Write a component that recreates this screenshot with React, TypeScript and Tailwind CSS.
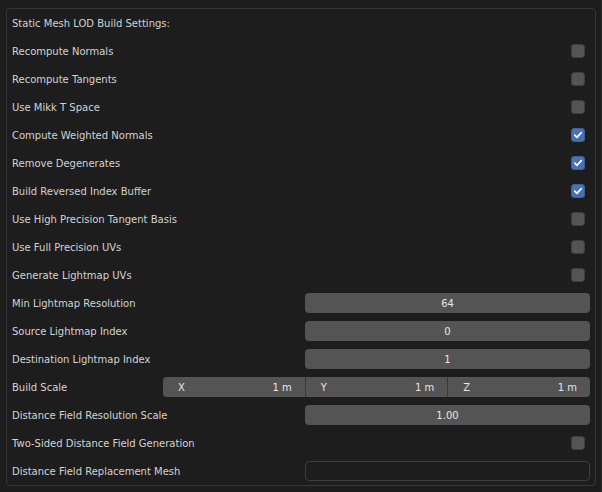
import React from "react";

type Row =
    | { kind: "title"; label: string }
    | { kind: "check"; label: string; checked: boolean }
    | { kind: "number"; label: string; value: string }
    | { kind: "vector"; label: string }
    | { kind: "object"; label: string };

const rows: Row[] = [
    { kind: "title", label: "Static Mesh LOD Build Settings:" },
    { kind: "check", label: "Recompute Normals", checked: false },
    { kind: "check", label: "Recompute Tangents", checked: false },
    { kind: "check", label: "Use Mikk T Space", checked: false },
    { kind: "check", label: "Compute Weighted Normals", checked: true },
    { kind: "check", label: "Remove Degenerates", checked: true },
    { kind: "check", label: "Build Reversed Index Buffer", checked: true },
    { kind: "check", label: "Use High Precision Tangent Basis", checked: false },
    { kind: "check", label: "Use Full Precision UVs", checked: false },
    { kind: "check", label: "Generate Lightmap UVs", checked: false },
    { kind: "number", label: "Min Lightmap Resolution", value: "64" },
    { kind: "number", label: "Source Lightmap Index", value: "0" },
    { kind: "number", label: "Destination Lightmap Index", value: "1" },
    { kind: "vector", label: "Build Scale" },
    { kind: "number", label: "Distance Field Resolution Scale", value: "1.00" },
    { kind: "check", label: "Two-Sided Distance Field Generation", checked: false },
    { kind: "object", label: "Distance Field Replacement Mesh" },
];

const Checkbox = ({ checked }: { checked: boolean }) =>
    checked ? (
        <div className="w-[14px] h-[14px] rounded-[3px] bg-[#4772b3] border border-[#3b5f96] flex items-center justify-center">
            <svg width="10" height="10" viewBox="0 0 10 10">
                <path d="M1.8 5.2 L4 7.3 L8.3 2.6" fill="none" stroke="#fff" strokeWidth="1.7" strokeLinecap="round" strokeLinejoin="round" />
            </svg>
        </div>
    ) : (
        <div className="w-[14px] h-[14px] rounded-[3px] bg-[#545454] border border-[#3d3d3d]" />
    );

const Segment = ({ axis, last }: { axis: string; last?: boolean }) => (
    <div className={`flex-1 h-full flex items-center justify-between pl-[15px] pr-[13px] ${last ? "" : "border-r border-[#3a3a3a]"}`}>
        <span>{axis}</span>
        <span>1 m</span>
    </div>
);

const App = () => {
    return (
        <div
            className="w-[602px] h-[492px] bg-[#1d1d1d] pt-[8px] pl-[6px] pr-[5px] border-r border-[#2b2b2b] text-[10px] text-[#d3d3d3]"
            style={{ fontFamily: '"DejaVu Sans", sans-serif' }}
        >
            <div className="h-[478px] rounded-[4px] border border-[#363636] bg-[#1d1d1d]">
                {rows.map((row, i) => (
                    <div key={i} className="h-[28px] flex items-center pl-[5px] pr-[5px]">
                        {row.kind === "vector" ? (
                            <>
                                <div className="w-[151px] shrink-0">{row.label}</div>
                                <div className="flex-1 h-[20px] flex rounded-[4px] bg-[#545454] text-[#e6e6e6]">
                                    <Segment axis="X" />
                                    <Segment axis="Y" />
                                    <Segment axis="Z" last />
                                </div>
                            </>
                        ) : (
                            <>
                                <div className="flex-1">{row.label}</div>
                                {row.kind === "check" ? (
                                    <div className="mr-[5px]">
                                        <Checkbox checked={row.checked} />
                                    </div>
                                ) : null}
                                {row.kind === "number" ? (
                                    <div className="w-[285px] h-[20px] rounded-[4px] bg-[#545454] flex items-center justify-center text-[#e6e6e6]">
                                        {row.value}
                                    </div>
                                ) : null}
                                {row.kind === "object" ? (
                                    <div className="w-[285px] h-[20px] rounded-[4px] bg-[#1d1d1d] border border-[#3d3d3d]" />
                                ) : null}
                            </>
                        )}
                    </div>
                ))}
            </div>
        </div>
    );
};

export default App;
